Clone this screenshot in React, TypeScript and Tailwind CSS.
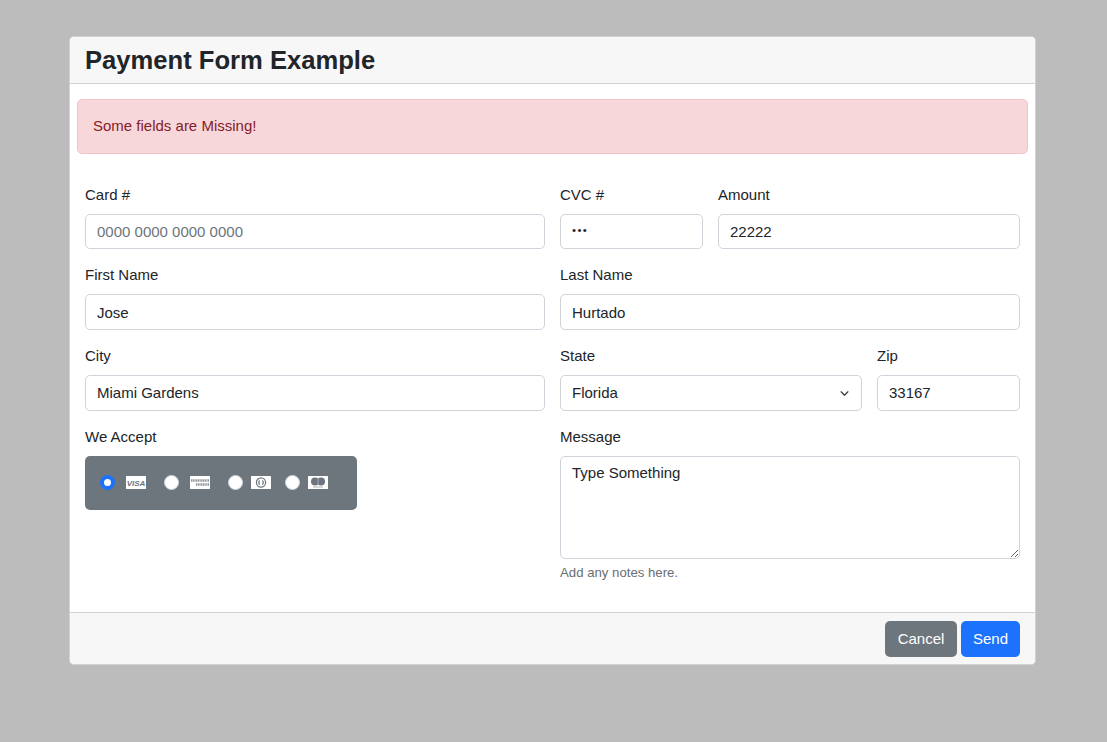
import React from "react";

const inputCls =
  "block w-full h-[35.6px] rounded-[5px] border border-[#ced4da] bg-white px-[11px] text-[15px] leading-[22.5px] text-[#212529] placeholder:text-[#6c757d] outline-none";

function Field({ label, className = "", children }: { label: string; className?: string; children: React.ReactNode }) {
  return (
    <div className={className}>
      <label className="mb-[7.5px] block text-[15px] leading-[22.5px] text-[#212529]">{label}</label>
      {children}
    </div>
  );
}

function Radio({ checked = false }: { checked?: boolean }) {
  return (
    <input
      type="radio"
      name="card"
      defaultChecked={checked}
      className={
        "m-0 block h-[15px] w-[15px] shrink-0 appearance-none rounded-full bg-white " +
        (checked ? "border-[4px] border-[#1c72fd]" : "border border-[#ced4da]")
      }
    />
  );
}

function Visa() {
  return (
    <svg width="20" height="13" viewBox="0 0 20 13" className="block overflow-visible">
      <rect width="20" height="13" fill="#fff" rx="0.5" />
      <text x="10" y="9.6" textAnchor="middle" fontSize="8" fontWeight="700" fontStyle="italic" fill="#6c757d" fontFamily="Liberation Sans, sans-serif">VISA</text>
    </svg>
  );
}
function Amex() {
  return (
    <svg width="20" height="13" viewBox="0 0 20 13" className="block">
      <rect width="20" height="13" fill="#fff" rx="0.5" />
      <path d="M1 4.5h18" stroke="#8d949a" strokeWidth="2.6" strokeDasharray="1.2 .5" />
      <path d="M6 8.5h13" stroke="#8d949a" strokeWidth="2.6" strokeDasharray="1.2 .5" />
    </svg>
  );
}
function Diners() {
  return (
    <svg width="20" height="13" viewBox="0 0 20 13" className="block">
      <rect width="20" height="13" fill="#fff" rx="0.5" />
      <circle cx="10" cy="6.5" r="4.6" fill="none" stroke="#6c757d" strokeWidth="1.2" />
      <path d="M8.6 3.4c-2 1.6-2 4.6 0 6.2z" fill="#6c757d" />
      <path d="M11.4 3.4c2 1.6 2 4.6 0 6.2z" fill="#6c757d" />
    </svg>
  );
}
function Master() {
  return (
    <svg width="20" height="13" viewBox="0 0 20 13" className="block">
      <rect width="20" height="13" fill="#fff" rx="0.5" />
      <circle cx="7" cy="5.4" r="4" fill="#6c757d" />
      <circle cx="13" cy="5.4" r="4" fill="#6c757d" />
      <path d="M10 2.6v5.6" stroke="#d5d8da" strokeWidth="0.6" />
      <path d="M5 11h10" stroke="#a4a9ae" strokeWidth="0.9" />
    </svg>
  );
}

export default function App() {
  return (
    <div className="min-h-[742px] bg-[#bcbcbc] pt-[36px] pl-[69px] font-['Liberation_Sans',Arial,sans-serif]">
      <div className="flex h-[629px] w-[967px] flex-col overflow-hidden rounded-[5px] border border-[#d0d2d4] bg-white">
        <div className="h-[47px] shrink-0 border-b border-[#cfd1d3] bg-[#f7f7f7] px-[15px] text-[25.6px] font-semibold leading-[46px] text-[#212529]">
          Payment Form Example
        </div>
        <div className="flex-1 px-[7px] pt-[15px]">
          <div className="flex h-[55px] items-center rounded-[5px] border border-[#f5c2c7] bg-[#f8d7da] px-[15px] text-[15px] text-[#842029]">
            Some fields are Missing!
          </div>
          <form className="grid grid-cols-2 gap-x-[15px] gap-y-[15.2px] px-2 pt-[29.6px]">
            <Field label="Card #">
              <input className={inputCls} placeholder="0000 0000 0000 0000" />
            </Field>
            <div className="flex gap-[15px]">
              <Field label="CVC #" className="w-[143px] shrink-0">
                <input type="password" defaultValue="222" className={inputCls + " !text-[11.5px] tracking-[1.4px] pb-[2px]"} />
              </Field>
              <Field label="Amount" className="flex-1">
                <input defaultValue="22222" className={inputCls} />
              </Field>
            </div>
            <Field label="First Name">
              <input defaultValue="Jose" className={inputCls} />
            </Field>
            <Field label="Last Name">
              <input defaultValue="Hurtado" className={inputCls} />
            </Field>
            <Field label="City">
              <input defaultValue="Miami Gardens" className={inputCls} />
            </Field>
            <div className="flex gap-[15px]">
              <Field label="State" className="flex-1">
                <div className="relative">
                  <select defaultValue="Florida" className={inputCls + " appearance-none"}>
                    <option>Florida</option>
                  </select>
                  <svg width="9" height="9" viewBox="0 0 16 16" className="absolute right-[13px] top-[13.5px]" fill="none" stroke="#343a40" strokeWidth="2.2" strokeLinecap="round" strokeLinejoin="round">
                    <path d="M2 5l6 6 6-6" />
                  </svg>
                </div>
              </Field>
              <Field label="Zip" className="w-[143px] shrink-0">
                <input defaultValue="33167" className={inputCls} />
              </Field>
            </div>
            <Field label="We Accept">
              <div className="flex h-[54px] w-[272px] items-center rounded-[5px] bg-[#6d767d] pl-[15px]">
                <Radio checked />
                <div className="ml-[11px]"><Visa /></div>
                <div className="ml-[18px]"><Radio /></div>
                <div className="ml-[11px]"><Amex /></div>
                <div className="ml-[18px]"><Radio /></div>
                <div className="ml-[8px]"><Diners /></div>
                <div className="ml-[14px]"><Radio /></div>
                <div className="ml-[8px]"><Master /></div>
              </div>
            </Field>
            <Field label="Message">
              <textarea
                defaultValue="Type Something"
                className="block h-[103px] w-full rounded-[5px] border border-[#ced4da] bg-white px-[11px] py-[5px] text-[15px] leading-[22.5px] text-[#212529] outline-none"
              />
              <div className="mt-[4px] text-[13.2px] leading-[20px] text-[#696e73]">Add any notes here.</div>
            </Field>
          </form>
        </div>
        <div className="flex h-[52px] shrink-0 items-center justify-end gap-[4px] border-t border-[#cfd1d3] bg-[#f7f7f7] pr-[15px]">
          <button type="button" className="h-[36px] w-[72px] rounded-[5px] bg-[#6d767d] pt-[1px] text-[15px] text-white">Cancel</button>
          <button type="button" className="h-[36px] w-[59px] rounded-[5px] bg-[#1c72fd] pt-[1px] text-[15px] text-white">Send</button>
        </div>
      </div>
    </div>
  );
}
